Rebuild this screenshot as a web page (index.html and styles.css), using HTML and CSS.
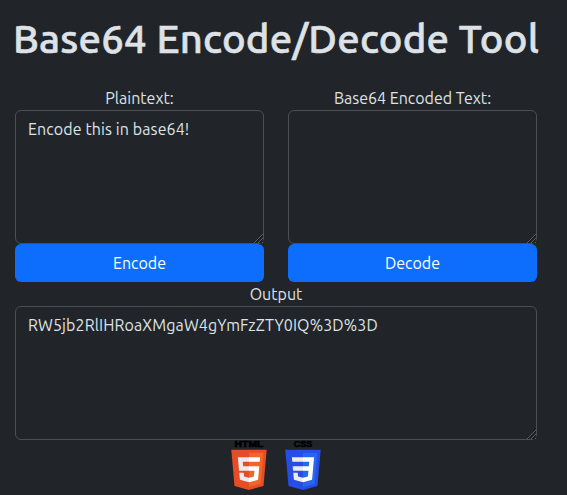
FILE: index.html
```html
<!DOCTYPE html>
<html lang="en">
<head>
<meta charset="utf-8">
<title>Base64 Encode/Decode Tool</title>
<link rel="stylesheet" href="styles.css">
</head>
<body>
<main class="container">
  <h1 class="title">Base64 Encode/Decode Tool</h1>
  <div class="row">
    <div class="col">
      <label class="label" for="plain">Plaintext:</label>
      <textarea class="field" id="plain" rows="5" spellcheck="false">Encode this in base64!</textarea>
      <button class="btn" type="button">Encode</button>
    </div>
    <div class="col">
      <label class="label" for="encoded">Base64 Encoded Text:</label>
      <textarea class="field" id="encoded" rows="5" spellcheck="false"></textarea>
      <button class="btn" type="button">Decode</button>
    </div>
  </div>
  <div class="col">
    <label class="label" for="output">Output</label>
    <textarea class="field" id="output" rows="5" spellcheck="false">RW5jb2RlIHRoaXMgaW4gYmFzZTY0IQ%3D%3D</textarea>
  </div>
  <footer class="logos">
    <svg class="logo" viewBox="0 0 512 512" role="img" aria-label="HTML5">
      <text class="mark" x="108" y="68" textLength="296" lengthAdjust="spacingAndGlyphs">HTML</text>
      <path fill="#e44d26" d="M107.644 470.877 74.633 100.62h362.735l-33.046 370.199L255.778 512z"/>
      <path fill="#f16529" d="M256 480.523l120.03-33.277 28.24-316.352H256z"/>
      <path fill="#ebebeb" d="M256 268.217h-60.09l-4.15-46.501H256v-45.411H142.132l1.087 12.183 11.161 125.139H256zM256 386.153l-.199.053-50.575-13.656-3.232-36.217h-45.586l6.362 71.301 93.02 25.823.21-.058z"/>
      <path fill="#fff" d="M255.843 268.217v45.41h55.918l-5.271 58.894-50.647 13.67v47.244l93.094-25.801.683-7.672 10.671-119.551 1.108-12.194zM255.843 176.305v45.411h109.688l.911-10.207 2.069-23.021 1.086-12.183z"/>
    </svg>
    <svg class="logo" viewBox="0 0 512 512" role="img" aria-label="CSS3">
      <text class="mark" x="162" y="68" textLength="188" lengthAdjust="spacingAndGlyphs">CSS</text>
      <path fill="#264de4" d="M107.644 470.877 74.633 100.62h362.735l-33.046 370.199L255.778 512z"/>
      <path fill="#2965f1" d="M256 480.523l120.03-33.277 28.24-316.352H256z"/>
      <path fill="#ebebeb" d="M150.31 268.217l4.07 45.41H256v-45.41zM256 176.305H142.132l4.132 45.411H256zM256 433.399v-47.246l-.199.053-50.575-13.656-3.232-36.217h-45.586l6.362 71.301 93.021 25.823z"/>
      <path fill="#fff" d="M255.843 176.305h113.754L348.937 407.634l-93.094 25.801v-47.244l50.647-13.67 5.271-58.894h-55.918v-45.41h60l4.2-46.501h-64.2z"/>
    </svg>
  </footer>
</main>
</body>
</html>
```
FILE: styles.css
```css
* {
  box-sizing: border-box;
}

body {
  margin: 0;
  overflow: hidden;
  background: #212529;
  color: #dee2e6;
  font: 16px/24px Ubuntu, "Noto Sans", sans-serif;
}

.container {
  width: 552px;
  padding: 15px 15px 0;
}

.title {
  margin: 0 -12px 23px -12px;
  font-size: 40px;
  font-weight: 500;
  letter-spacing: 0.24px;
  line-height: 48px;
  text-align: center;
  white-space: nowrap;
  -webkit-text-stroke: 0.6px #dee2e6;
}

.row {
  display: grid;
  grid-template-columns: 1fr 1fr;
  gap: 24px;
}

.col {
  display: flex;
  flex-direction: column;
}

.label {
  text-align: center;
}

.field {
  display: block;
  width: 100%;
  height: 134px;
  margin: 0;
  padding: 6px 12px;
  border: 1px solid #495057;
  border-radius: 6px;
  background: #212529;
  color: #dee2e6;
  font: inherit;
  letter-spacing: 0.1px;
  resize: vertical;
}

.field::-webkit-resizer {
  background:
    linear-gradient(135deg, #212529 50%, transparent 50%) bottom right / 11px 11px no-repeat,
    repeating-linear-gradient(135deg, #5d6064 0 1px, #16191c 1px 2px, #212529 2px 2.83px) bottom right / 11px 11px no-repeat;
}

.btn {
  height: 38px;
  padding: 0;
  border: 0;
  border-radius: 6px;
  background: #0d6efd;
  color: #fff;
  font: inherit;
}

.logos {
  display: flex;
  justify-content: center;
  gap: 4px;
}

.logo {
  width: 50px;
  height: 50px;
  overflow: visible;
}

.mark {
  font: bold 94px "Liberation Sans", sans-serif;
  stroke: #000;
  stroke-width: 6px;
}
```
